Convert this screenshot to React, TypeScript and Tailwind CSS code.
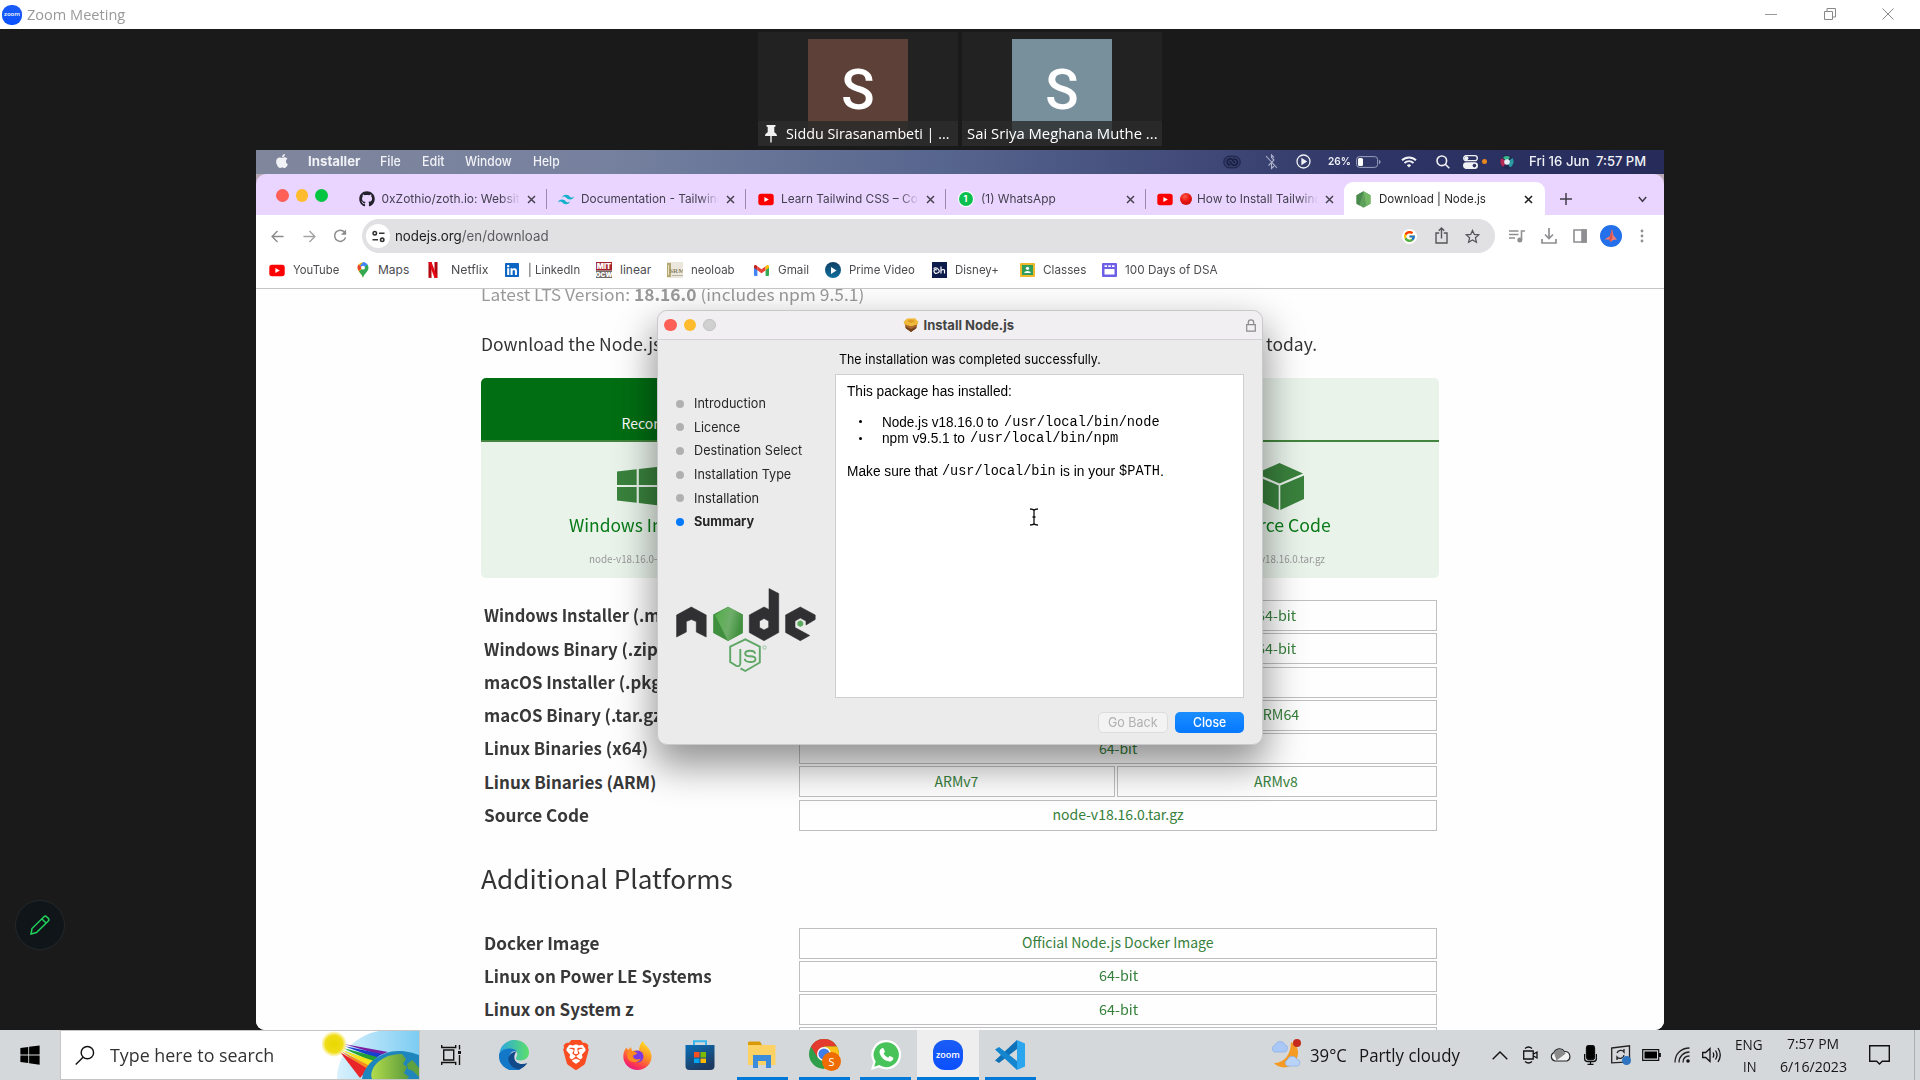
import React, { useLayoutEffect, useRef, useState } from "react";
import { FaApple, FaGithub, FaLinkedin, FaWhatsapp, FaWindows } from "react-icons/fa";
import { SiTailwindcss, SiBrave } from "react-icons/si";
import { FcGoogle } from "react-icons/fc";

/** A one-line label squeezed or stretched to fill exactly `w` pixels. */
function Fit({ w, className = "", children }: { w: number; className?: string; children: React.ReactNode }) {
  const ref = useRef<HTMLSpanElement>(null);
  const [scale, setScale] = useState(1);
  useLayoutEffect(() => {
    if (ref.current && ref.current.offsetWidth > 0) setScale(w / ref.current.offsetWidth);
  }, [w]);
  return (
    <span className={"flex shrink-0 " + className} style={{ width: w }}>
      <span ref={ref} className="inline-block origin-left shrink-0 whitespace-pre leading-none" style={{ transform: `scaleX(${scale})` }}>
        {children}
      </span>
    </span>
  );
}

const YouTube = () => (
  <svg className="h-[13px] w-4 shrink-0" viewBox="0 0 16 13">
    <rect x="0.3" y="0.8" width="15.4" height="11.4" rx="2.6" fill="#f00" />
    <path d="M6.4 3.9v5.2l4.4-2.6z" fill="#fff" />
  </svg>
);

const NodeHex = () => (
  <svg className="h-[17px] w-[15px]" viewBox="0 0 15 17">
    <path d="M7.5 0.3l7 4v8.4l-7 4-7-4V4.300z" fill="#5fa15c" />
    <path d="M7.500 0.3l7 4v8.400l-4 2.300z" fill="#77b868" />
    <path d="M0.500 4.300L7.500 0.300 3.500 14.400l-3-1.700z" fill="#4b8a4e" />
  </svg>
);

const Lights = ({ dim }: { dim?: boolean }) => (
  <div className="flex items-center gap-[7px]">
    <i className="size-[12.500px] rounded-full bg-[#fe5f57]" />
    <i className="size-[12.500px] rounded-full bg-[#febb2e]" />
    <i className={dim ? "size-[12.500px] rounded-full border border-[#c2c2c3] bg-[#d1d0d1]" : "size-[12.500px] rounded-full bg-[#06c540]"} />
  </div>
);

const ZoomLogo = ({ big }: { big?: boolean }) => (
  <span
    className={
      big
        ? "flex h-[30px] w-[30px] items-center justify-center rounded-[12px] bg-gradient-to-b from-[#1a5cf5] to-[#0b50ff] text-[9px] font-semibold leading-none text-white"
        : "flex size-5 shrink-0 items-center justify-center rounded-[9px] bg-gradient-to-b from-[#1a5cf5] to-[#0b50ff] text-[6px] font-semibold leading-none text-white"
    }
  >
    <span className="pb-px">zoom</span>
  </span>
);

function TitleBar() {
  return (
    <header className="flex h-[29px] items-center bg-white pl-[2px] font-['Open_Sans',sans-serif] text-[#999]">
      <ZoomLogo />
      <Fit w={98} className="ml-[5px] text-[15px]">Zoom Meeting</Fit>
      <div className="ml-auto flex items-center gap-[46px] pb-px pr-[26px]">
        <i className="mr-px h-px w-3 bg-[#999]" />
        <svg className="size-3" viewBox="0 0 12 12" fill="none" stroke="#888">
          <path d="M0.500 3.500h8v8h-8zM3 3.500v-3h8.500V9H8.500" />
        </svg>
        <svg className="size-3" viewBox="0 0 12 12" fill="none" stroke="#888">
          <path d="M0.500 0.500l11 11M11.500 0.500l-11 11" />
        </svg>
      </div>
    </header>
  );
}

function Participants() {
  return (
    <div className="flex h-[121px] justify-center gap-1 pt-[3px]">
      <div className="relative flex h-[114px] w-[200px] justify-center bg-[#222] pt-[7px]">
        <div className="flex h-[100px] w-[100px] items-center justify-center bg-[#5d4037] pt-[2px] font-[Roboto,sans-serif] text-[55px] font-medium leading-none text-white">S</div>
        <div className="absolute inset-x-0 bottom-0 flex h-[25px] items-center bg-[#2b2b2be0] pl-[7px] font-['Open_Sans',sans-serif] text-[15px] text-white">
          <svg className="h-[18px] w-3" viewBox="0 0 12 18" fill="#f0f0f0">
            <path d="M1.500 0h9v1.500L9.300 2v5.300c1.500.7 2.700 2 2.700 3.700H6.700v6l-.7 1-.7-1v-6H0c0-1.700 1.200-3 2.700-3.700V2L1.500 1.500z" />
          </svg>
          <Fit w={163} className="ml-[9px]">Siddu Sirasanambeti | ...</Fit>
        </div>
      </div>
      <div className="relative flex h-[114px] w-[200px] justify-center bg-[#222] pt-[7px]">
        <div className="flex h-[100px] w-[100px] items-center justify-center bg-[#78909c] pt-[2px] font-[Roboto,sans-serif] text-[55px] font-medium leading-none text-white">S</div>
        <div className="absolute inset-x-0 bottom-0 flex h-[25px] items-center bg-[#2b2b2bd0] pl-[5px] font-['Open_Sans',sans-serif] text-[15px] text-white">
          <Fit w={191}>Sai Sriya Meghana Muthe ...</Fit>
        </div>
      </div>
    </div>
  );
}

function MenuBar() {
  return (
    <div className="flex h-6 shrink-0 items-center bg-[linear-gradient(90deg,#80869c_0%,#76819f_25%,#56658e_49%,#434c7a_65%,#2e3566_80%,#262b5a_100%)] pb-px pl-[18px] pr-[18px] text-[13px] text-[#f1f2f6]">
      <FaApple className="mt-[-1px] size-4" />
      <Fit w={52} className="ml-[18px] font-bold">Installer</Fit>
      <Fit w={21} className="ml-[20px] font-medium">File</Fit>
      <Fit w={23} className="ml-[21px] font-medium">Edit</Fit>
      <Fit w={47} className="ml-[20px] font-medium">Window</Fit>
      <Fit w={27} className="ml-[21px] font-medium">Help</Fit>
      <div className="ml-auto flex items-center">
        <svg className="h-[14px] w-[18px]" viewBox="0 0 19 14" fill="none" stroke="#171a3a" strokeWidth="1.600">
          <rect x="0.800" y="0.800" width="17.400" height="12.400" rx="6" fill="#323a68" strokeWidth="0.800" />
          <path d="M8 10a3.200 3.200 0 1 1 1.800-5.500l2.700 3.500M11 4.300a3.200 3.200 0 1 1-1.500 5L7 6.200" strokeWidth="1.300" />
        </svg>
        <svg className="ml-[24px] h-[16px] w-[13px]" viewBox="0 0 13 16" fill="none" stroke="#aeb2cb" strokeWidth="1.100">
          <path d="M1 2l11 12M3.500 11.500L9 6 6.500 3.500V1L9 3.500M6.500 8v6.500L9 12" />
        </svg>
        <svg className="ml-[18px] size-[15px]" viewBox="0 0 15 15" fill="none" stroke="#f1f2f6" strokeWidth="1.300">
          <circle cx="7.500" cy="7.500" r="6.500" />
          <path d="M6 5v5l4-2.500z" fill="#f1f2f6" />
        </svg>
        <Fit w={23} className="ml-[17px] text-[11px] font-semibold">26%</Fit>
        <svg className="ml-[5px] h-3 w-[25px]" viewBox="0 0 25 12" fill="none">
          <rect x="0.600" y="0.600" width="21" height="10.800" rx="3" stroke="#9a9fbd" />
          <rect x="2" y="2" width="5" height="8" rx="1.500" fill="#fff" />
          <path d="M23 4v4c1-.3 1.500-1 1.500-2S24 4.300 23 4z" fill="#9a9fbd" />
        </svg>
        <svg className="ml-[20px] h-3 w-4" viewBox="0 0 16 12" fill="none" stroke="#f1f2f6" strokeWidth="1.900">
          <path d="M1 4.300a10 10 0 0 1 14 0M3.500 7a6.400 6.400 0 0 1 9 0" />
          <path d="M8 11.500L5.800 9.200a3.200 3.200 0 0 1 4.400 0z" fill="#f1f2f6" stroke="none" />
        </svg>
        <svg className="ml-[19px] size-[14px]" viewBox="0 0 14 14" fill="none" stroke="#f1f2f6" strokeWidth="1.600">
          <circle cx="5.800" cy="5.800" r="4.800" />
          <path d="M9.300 9.300L13.300 13.300" />
        </svg>
        <svg className="ml-[13px] h-[14px] w-[15px]" viewBox="0 0 15 14" fill="none" stroke="#f1f2f6" strokeWidth="1.300">
          <rect x="0.700" y="0.700" width="13.600" height="5" rx="2.500" />
          <rect x="0.700" y="8" width="13.600" height="5.300" rx="2.600" fill="#f1f2f6" />
          <circle cx="3.400" cy="3.200" r="2" fill="#f1f2f6" stroke="none" />
          <circle cx="11.400" cy="10.600" r="1.800" fill="#2b3060" stroke="none" />
        </svg>
        <i className="ml-1 size-[5px] rounded-full bg-[#e8871e]" />
        <svg className="ml-[13px] size-[14px]" viewBox="0 0 14 14">
          <circle cx="7" cy="7" r="7" fill="#232a52" />
          <path d="M7 7L1.500 3A6.500 6.500 0 0 0 3 12z" fill="#b32a55" />
          <path d="M7 7l5.500-4A6.500 6.500 0 0 1 10 12.500z" fill="#2a9aa0" />
          <path d="M7 7L3 2.500a6.500 6.500 0 0 1 7-.5z" fill="#38b58c" />
          <circle cx="7" cy="7" r="2.800" fill="#e6eef5" />
        </svg>
        <Fit w={60} className="ml-[15px] font-medium">Fri 16 Jun</Fit>
        <Fit w={50} className="ml-[7px] font-medium">7:57 PM</Fit>
      </div>
    </div>
  );
}

const Cross = ({ dark }: { dark?: boolean }) => (
  <svg className="size-[9px] shrink-0" viewBox="0 0 9 9" stroke={dark ? "#1c1c1e" : "#47424f"} strokeWidth="1.500">
    <path d="M1 1l7 7M8 1l-7 7" />
  </svg>
);

function Tab({ icon, title, w, last }: { icon: React.ReactNode; title: React.ReactNode; w: number; last?: boolean }) {
  return (
    <div className="flex h-[33px] w-[199.700px] items-center pt-px">
      <span className="flex w-4 items-center justify-center">{icon}</span>
      <div className="ml-[7px] w-[138px] overflow-hidden py-1 text-[12px] text-[#45404f] [mask-image:linear-gradient(90deg,#000_86%,transparent_100%)]">
        <div className="flex items-center">{typeof title === "string" ? <Fit w={w}>{title}</Fit> : title}</div>
      </div>
      <span className="ml-[7px] flex"><Cross /></span>
      <i className={last ? "hidden" : "ml-[10px] h-5 w-px bg-[#9a8aae]"} />
    </div>
  );
}

function TabStrip() {
  return (
    <div className="h-[41px] shrink-0 bg-[#b9a9b4]">
      <div className="flex h-[41px] items-start rounded-t-[10px] bg-[#e9d5ff] pl-[20px] pt-2">
        <div className="pt-[7px]"><Lights /></div>
        <div className="ml-[31px] flex">
          <Tab icon={<FaGithub className="size-4 text-[#24202c]" />} title="0xZothio/zoth.io: Website" w={145} />
          <Tab icon={<SiTailwindcss className="size-[17px] text-[#14b0cc]" />} title="Documentation - Tailwind" w={143} />
          <Tab icon={<YouTube />} title="Learn Tailwind CSS – Cour" w={148} />
          <Tab
            icon={<span className="flex size-[14px] items-center justify-center rounded-full bg-[#09bf4f] text-[9px] font-bold text-white ring-1 ring-white">1</span>}
            title="(1) WhatsApp"
            w={75}
          />
          <div className="w-[187px]">
            <Tab
              icon={<YouTube />}
              title={
                <>
                  <i className="mr-[5px] size-3 shrink-0 rounded-full bg-[radial-gradient(circle_at_40%_30%,#ff5a4a,#e8150f_45%,#b80c0c)]" />
                  <Fit w={125}>How to Install Tailwind</Fit>
                </>
              }
              w={0}
              last
            />
          </div>
        </div>
        <div className="relative flex h-[33px] w-[201px] items-center rounded-t-[9px] bg-white pl-[12px] pt-px">
          <NodeHex />
          <Fit w={107} className="ml-2 text-[12px] text-[#26262a]">Download | Node.js</Fit>
          <span className="ml-[38px]"><Cross dark /></span>
        </div>
        <svg className="ml-[15px] mt-[11px] size-3" viewBox="0 0 12 12" stroke="#423c4a" strokeWidth="1.500">
          <path d="M6 0v12M0 6h12" />
        </svg>
        <svg className="ml-[66px] mt-[14px] h-[7px] w-[9px]" viewBox="0 0 9 7" fill="none" stroke="#423c4a" strokeWidth="1.500">
          <path d="M0.800 1L4.500 5.300 8.200 1" />
        </svg>
      </div>
    </div>
  );
}

function Toolbar() {
  return (
    <div className="flex h-[42px] shrink-0 items-center bg-white pl-[15px]">
      <svg className="size-[13px]" viewBox="0 0 14 14" fill="none" stroke="#8b8b8e" strokeWidth="1.500"><path d="M13.500 7H1.500M7 1L1.200 7 7 13" /></svg>
      <svg className="ml-[19px] size-[13px]" viewBox="0 0 14 14" fill="none" stroke="#a3a3a6" strokeWidth="1.500"><path d="M0.500 7h12M7 1l5.800 6L7 13" /></svg>
      <svg className="ml-[17px] size-[14px]" viewBox="0 0 15 15" fill="none" stroke="#8b8b8e" strokeWidth="1.600"><path d="M13.500 9A6 6 0 1 1 12.300 3.300L13.800 5" /><path d="M14 0.500v5.700H8.500z" fill="#8b8b8e" stroke="none" /></svg>
      <div className="ml-[15px] flex h-[34px] w-[1133px] items-center rounded-full bg-[#e1e1e3] pl-[4px]">
        <span className="flex size-[24px] items-center justify-center rounded-full bg-white">
          <svg className="size-[13px]" viewBox="0 0 13 13" fill="none" stroke="#333" strokeWidth="1.600">
            <circle cx="2.800" cy="3.200" r="1.700" /><path d="M7 3.200h5.500M0.500 9.800H6" /><circle cx="10.200" cy="9.800" r="1.700" />
          </svg>
        </span>
        <Fit w={154} className="ml-[5px] text-[14px] text-[#5b5b5f]"><span className="text-[#1b1b1d]">nodejs.org</span>/en/download</Fit>
        <span className="ml-[853px] flex size-[15px] items-center justify-center rounded-full bg-white"><FcGoogle className="size-[13px]" /></span>
        <svg className="ml-[18px] mt-[-1px] h-[17px] w-[13px]" viewBox="0 0 13 17" fill="none" stroke="#55555a" strokeWidth="1.400"><path d="M4.200 6H1v10h11V6H8.800M6.500 11.500V1.200M3.700 3.800L6.500 1l2.800 2.800" /></svg>
        <svg className="ml-[17px] size-[15px]" viewBox="0 0 15 15" fill="none" stroke="#55555a" strokeWidth="1.300"><path d="M7.500 1.500l1.800 4 4.400.4-3.300 2.900 1 4.400-3.900-2.300-3.900 2.300 1-4.400L1.300 5.900l4.400-.4z" /></svg>
      </div>
      <svg className="ml-[14px] h-[14px] w-[16px]" viewBox="0 0 16 14" fill="none" stroke="#8f8f92" strokeWidth="1.600"><path d="M0 2h9.500M0 5.500h9.500M0 9h6M12.500 11V2H16" /><circle cx="10.800" cy="11" r="1.700" fill="#8f8f92" /></svg>
      <svg className="ml-[16px] size-[16px]" viewBox="0 0 16 16" fill="none" stroke="#8f8f92" strokeWidth="1.700"><path d="M8 0v10M4 6.500L8 10.500 12 6.500M1 11v4h14v-4" /></svg>
      <svg className="ml-[16px] h-[14px] w-[14px]" viewBox="0 0 14 14" fill="none" stroke="#8f8f92" strokeWidth="1.600"><path d="M1 1h12v12H1z" /><path d="M9 1h4v12H9z" fill="#8f8f92" /></svg>
      <svg className="ml-[13px] size-[22px]" viewBox="0 0 22 22"><circle cx="11" cy="11" r="11" fill="#2370ea" /><path d="M12 4l1.500 6.500 3.500 4-4 .5-2 2-2-2.500-4.500 0L10 11z" fill="#f47c74" /><path d="M12 4L12.500 12l-1.500 5-2-2.500z" fill="#d9534f" /></svg>
      <svg className="ml-[18px] h-[14px] w-1" viewBox="0 0 4 14" fill="#8f8f92"><circle cx="2" cy="2" r="1.400" /><circle cx="2" cy="7" r="1.400" /><circle cx="2" cy="12" r="1.400" /></svg>
    </div>
  );
}

function Bookmark({ icon, label, w, slot }: { icon: React.ReactNode; label: string; w: number; slot: number }) {
  return (
    <div className="flex shrink-0 items-center" style={{ width: slot }}>
      <span className="flex w-4 shrink-0 justify-center">{icon}</span>
      <Fit w={w} className="ml-2">{label}</Fit>
    </div>
  );
}

function Bookmarks() {
  return (
    <div className="flex h-[32px] shrink-0 items-center border-b border-[#c6c6c8] bg-white pb-[5px] pl-[13px] text-[12px] text-[#4c4c50]">
      <Bookmark slot={86} w={46} label="YouTube" icon={<YouTube />} />
      <div className="flex w-[71px] items-center">
        <svg className="ml-[2px] h-4 w-3" viewBox="0 0 12 16"><path d="M6 16C5.500 12 .5 10 .5 5.700A5.500 5.500 0 0 1 6 .3z" fill="#fbbc04" /><path d="M6 16c.5-4 5.500-6 5.500-10.300A5.500 5.500 0 0 0 10 2L2 9.500C4 12 5.500 13.500 6 16z" fill="#34a853" /><path d="M6 .3A5.500 5.500 0 0 1 10.500 2.500L6 7z" fill="#4285f4" /><path d="M6 .3L3 3.500l2 2 4-4A5.500 5.500 0 0 0 6 .3z" fill="#4285f4" /><path d="M1.500 2.500L5 5.500 2 9C0 6.500.3 4 1.500 2.500z" fill="#ea4335" /><circle cx="6" cy="5.700" r="1.900" fill="#fff" /></svg>
        <Fit w={31} className="ml-[9px]">Maps</Fit>
      </div>
      <div className="flex w-[78px] items-center">
        <svg className="ml-[2px] h-4 w-[10px]" viewBox="0 0 10 16"><path d="M0.500 0h3v16l-3-.3zM6.500 0h3v15.700l-3 .3z" fill="#b1060f" /><path d="M0.500 0h3l6 15.700-3 .3z" fill="#e50914" /></svg>
        <Fit w={37} className="ml-[13px]">Netflix</Fit>
      </div>
      <Bookmark slot={92} w={52} label="| LinkedIn" icon={<FaLinkedin className="size-4 text-[#0a66c2]" />} />
      <Bookmark slot={70.500} w={31} label="linear" icon={
        <svg className="size-4" viewBox="0 0 16 16">
          <path d="M0 0h16v8.500H0z" fill="#a3232f" /><path d="M0 8.500h16V16H0z" fill="#746a66" />
          <text x="8" y="7.300" fontSize="7.500" fontWeight="900" textAnchor="middle" fill="#fff">MIT</text>
          <text x="8" y="15" fontSize="6.500" fontWeight="900" textAnchor="middle" fill="#fff">OCW</text>
        </svg>} />
      <Bookmark slot={87} w={44} label="neoloab" icon={
        <svg className="size-4" viewBox="0 0 16 16">
          <path d="M0 0h16v16H0z" fill="#ebe7dc" /><path d="M0 1h4v14H0z" fill="#b3a873" /><path d="M1.500 3v10" stroke="#e8e0bb" /><path d="M5 13.500h11" stroke="#b9b3a0" />
          <text x="10" y="10.500" fontSize="7" fontWeight="700" textAnchor="middle" fill="#8b8468" fontFamily="Liberation Serif">SRM</text>
        </svg>} />
      <Bookmark slot={71.500} w={31} label="Gmail" icon={
        <svg className="h-[11px] w-[15px]" viewBox="0 0 15 11"><path d="M0 1.500L3.400 4v7H1a1 1 0 0 1-1-1z" fill="#4285f4" /><path d="M15 1.500L11.600 4v7H14a1 1 0 0 0 1-1z" fill="#34a853" /><path d="M3.400 1.200L7.500 4.300l4.100-3.100v4L7.500 8.300 3.400 5.200z" fill="#ea4335" /><path d="M0 1.500C0 .2 1.400-.4 2.500.5l.9.700v4L0 2.700z" fill="#c5221f" /><path d="M15 1.500c0-1.300-1.400-1.900-2.500-1l-.9.700v4L15 2.700z" fill="#fbbc04" /></svg>} />
      <Bookmark slot={106} w={66} label="Prime Video" icon={
        <span className="flex size-4 items-center justify-center rounded-full bg-gradient-to-b from-[#0d3f63] to-[#12709e]"><svg className="size-[7px]" viewBox="0 0 7 7" fill="#fff"><path d="M1 0v7l5.500-3.500z" /></svg></span>} />
      <Bookmark slot={88} w={44} label="Disney+" icon={
        <svg className="h-4 w-[15px]" viewBox="0 0 15 16">
          <path d="M0 0h15v16H0z" fill="#0e1c4c" /><path d="M1.500 6.500q3-1.500 5 1t-1 3.500-3.500-1.500 3-1.500M9 4.500v7M9 8.500q3-2 3.500 0v3" fill="none" stroke="#fff" strokeWidth="1.200" />
        </svg>} />
      <Bookmark slot={82} w={43} label="Classes" icon={
        <svg className="h-[14px] w-[15px]" viewBox="0 0 15 14"><rect width="15" height="14" rx="1" fill="#f0b92c" /><rect x="2" y="2" width="11" height="10" fill="#2f9e5b" /><circle cx="7.500" cy="5.300" r="1.600" fill="#fff" /><path d="M4.200 10c.3-2.700 6.300-2.700 6.600 0z" fill="#fff" /></svg>} />
      <Bookmark slot={110} w={93} label="100 Days of DSA" icon={
        <svg className="h-[14px] w-[15px]" viewBox="0 0 15 14"><rect width="15" height="14" rx="1" fill="#6d5fe6" /><rect x="2.500" y="6" width="10" height="5.500" fill="#fff" /><path d="M2.500 2.300h2.500v1.800H2.500zM6.300 2.300h2.500v1.800H6.300zM10 2.300h2.500v1.800H10z" fill="#fff" /></svg>} />
    </div>
  );
}

function Row({ label, lw, cells }: { label: string; lw: number; cells: [string, number][] }) {
  return (
    <div className="flex h-[31px] shrink-0">
      <div className="flex w-[318px] shrink-0 items-center pl-[3px] text-[17px] font-bold text-[#383838]">
        <Fit w={lw} className="mt-[-1.500px]">{label}</Fit>
      </div>
      <div className="flex w-[638px] gap-[2px]">
        {cells.map(([t, w], i) => (
          <div
            key={i}
            className={
              "flex items-center justify-center border border-[#bfbfc1] pb-[2px] text-[14px] text-[#36803b] " +
              (cells.length === 1 ? "w-[638px]" : i === 0 ? "w-[316px] pr-px" : "w-[320px] pr-[2px]")
            }
          >
            {t && <Fit w={w}>{t}</Fit>}
          </div>
        ))}
      </div>
    </div>
  );
}

function Page() {
  return (
    <main className="min-h-0 flex-1 overflow-hidden bg-[#fefefe] pl-[225px] font-['Noto_Sans_CJK_SC',sans-serif] text-[#333]">
      <div className="flex h-[89px] flex-col text-[17px]">
        <Fit w={383.500} className="mt-[-3px] text-[16.500px] text-[#999]">Latest LTS Version: <b>18.16.0</b> (includes npm 9.5.1)</Fit>
        <Fit w={836} className="mt-[32px]">Download the Node.js source code or a pre-built installer for your platform, and start developing today.</Fit>
      </div>
      <section className="w-[958px] overflow-hidden rounded-[5px] bg-[#e9f3ea]">
        <div className="flex h-[64px] border-b-2 border-[#43853d]">
          <div className="flex w-[479px] justify-center bg-[#026e13] pt-[38px] text-[14px] text-white"><Fit w={198}>Recommended For Most Users</Fit></div>
        </div>
        <div className="grid h-[136px] grid-cols-3 text-[17.500px] text-[#087a17]">
          <div className="flex flex-col items-center pt-[21px]">
            <FaWindows className="h-[46px] w-[48px] text-[#3a823d]" preserveAspectRatio="none" />
            <Fit w={143} className="mt-[7px]">Windows Installer</Fit>
            <Fit w={103} className="mt-[19px] text-[11px] text-[#999]">node-v18.16.0-x64.msi</Fit>
          </div>
          <div />
          <div className="flex flex-col items-center pt-[21px]">
            <svg className="h-[47px] w-[49px]" viewBox="0 0 49 47" fill="#3a823d">
              <path d="M24.500 0L48 10.500 24.500 20.500 1 10.500zM0 12.500l23.700 10V47L0 36zM49 12.500l-23.700 10V47L49 36z" />
            </svg>
            <Fit w={104} className="mt-[6px]">Source Code</Fit>
            <Fit w={92} className="mt-[19px] text-[11px] text-[#999]">node-v18.16.0.tar.gz</Fit>
          </div>
        </div>
      </section>
      <section className="mt-[22px] flex flex-col gap-[2.250px]">
        <Row label="Windows Installer (.msi)" lw={196} cells={[["32-bit", 39], ["64-bit", 39]]} />
        <Row label="Windows Binary (.zip)" lw={180} cells={[["32-bit", 39], ["64-bit", 39]]} />
        <Row label="macOS Installer (.pkg)" lw={184} cells={[["", 0]]} />
        <Row label="macOS Binary (.tar.gz)" lw={184} cells={[["64-bit", 39], ["ARM64", 45]]} />
        <Row label="Linux Binaries (x64)" lw={164} cells={[["64-bit", 38]]} />
        <Row label="Linux Binaries (ARM)" lw={172} cells={[["ARMv7", 44], ["ARMv8", 44]]} />
        <Row label="Source Code" lw={105} cells={[["node-v18.16.0.tar.gz", 131]]} />
      </section>
      <Fit w={252} className="mt-[34px] text-[26px]">Additional Platforms</Fit>
      <section className="mt-[37px] flex flex-col gap-[2.250px]">
        <Row label="Docker Image" lw={115} cells={[["Official Node.js Docker Image", 192]]} />
        <Row label="Linux on Power LE Systems" lw={228} cells={[["64-bit", 39]]} />
        <Row label="Linux on System z" lw={150} cells={[["64-bit", 39]]} />
        <Row label="" lw={1} cells={[["", 0]]} />
      </section>
    </main>
  );
}

const NodeLogo = () => (
  <svg className="h-[86px] w-[141px]" viewBox="0 0 141 86">
    <defs>
      <linearGradient id="hexLight" x1="0" y1="0" x2="1" y2="0.300"><stop offset="0" stopColor="#4fae45" /><stop offset="0.600" stopColor="#6fae6a" /><stop offset="1" stopColor="#41903f" /></linearGradient>
    </defs>
    <g fill="#303032" fillRule="evenodd" stroke="#303032" strokeWidth="0.600" strokeLinejoin="round">
      <path d="M0.600 49V27L15.300 19 30.200 27V49L20.300 44V33.500L15.300 31.500 10.300 33.500V44z" />
      <path d="M93 0.600L102.700 5.500V44.500L88 52.700 73.300 44.500V27L88 19 93 21.500zM88 30.500L83.500 33V39.500L88 42 92.700 39.500V33z" />
      <path d="M109.600 27L124.300 19 139.200 27V31.500L130 37V33L124.300 30 119 33V39.500L133.700 47.500 124.300 52.700 109.600 44.500z" />
    </g>
    <path d="M52 18.700L66.700 26.500V45L52 53 37.200 45V26.500z" fill="#3f8f3e" />
    <path d="M52 18.700L66.700 26.500V45L52 53 39 27z" fill="url(#hexLight)" />
    <path d="M124.300 32.300l2.900 1.700v3.300l-2.900 1.700-2.900-1.700v-3.300z" fill="#5cab5f" />
    <path d="M64.300 61V75q0 4.200-4 2.800L54.200 74V58.700L69.300 51.300 83.800 58.700V74.500L69.300 83 64.500 80.300M79 65.800q0-3-5-3-4.800 0-4.800 2.800t5 2.700q5.300 0 5.300 2.900t-5.300 2.800q-5.300 0-5.500-3.200" fill="none" stroke="#5fa766" strokeWidth="1.900" />
    <circle cx="88.500" cy="59.500" r="1.700" fill="none" stroke="#8fbf93" strokeWidth="0.900" />
  </svg>
);

function Installer() {
  const steps: [string, number][] = [["Introduction", 72], ["Licence", 46], ["Destination Select", 108], ["Installation Type", 97], ["Installation", 65], ["Summary", 60]];
  return (
    <div className="absolute left-[401px] top-[160px] flex h-[435px] w-[606px] flex-col rounded-[10px] border border-[#c9c9cb] bg-[#ebebeb] text-[13px] text-[#262626] shadow-[0_18px_38px_3px_rgba(0,0,0,0.42)]">
      <div className="flex h-[29px] shrink-0 items-center rounded-t-[10px] border-b border-[#d2d2d3] bg-[#f1eff1] pl-[6px]">
        <Lights dim />
        <svg className="ml-[187px] h-[14px] w-[16px]" viewBox="0 0 16 14">
          <path d="M1.500 5l6.500 3 6.500-3-1 5L8 14l-5.500-4z" fill="#a9682f" />
          <path d="M2.500 8.500L8 11l5.500-2.500-.5 2L8 14l-5-3.500z" fill="#74421c" />
          <path d="M0.500 4L4 .6 12 .3l3.500 3.700-1.500 2.500-6 1.800-6-1.800z" fill="#f0b93a" />
          <path d="M4 3l4-1.600 4.500 1.800L8 5z" fill="#dd9c27" />
        </svg>
        <Fit w={91} className="ml-[5px] font-bold text-[#444]">Install Node.js</Fit>
        <svg className="ml-auto mr-[6px] h-[13px] w-[10px]" viewBox="0 0 10 13" fill="none" stroke="#8a8a8c" strokeWidth="1.200">
          <path d="M0.700 5.600h8.600v6.600H0.700zM2.300 5.600V3.500a2.700 2.700 0 0 1 5.400 0v2.100" />
        </svg>
      </div>
      <div className="flex flex-1">
        <div className="flex w-[177px] flex-col pl-[18px] pt-[52px]">
          {steps.map(([s, w], i) => (
            <div key={s} className="flex h-[23.600px] items-center">
              <i className={i === 5 ? "size-2 rounded-full bg-[#057aff]" : "size-2 rounded-full bg-[#b0b0b1]"} />
              <Fit w={w} className={i === 5 ? "ml-[10px] font-bold" : "ml-[10px]"}>{s}</Fit>
            </div>
          ))}
          <div className="mt-[54px]"><NodeLogo /></div>
        </div>
        <div className="flex w-[409px] flex-col">
          <Fit w={262} className="ml-[4px] mt-[13px] text-black">The installation was completed successfully.</Fit>
          <div className="mt-[8px] h-[324px] w-[409px] shrink-0 border border-[#cfcfd0] bg-white pl-[11px] pt-[9px] font-['Liberation_Sans',sans-serif] text-[14px] text-black">
            <Fit w={165}>This package has installed:</Fit>
            <div className="mt-[15.500px] flex h-[16.500px] items-center">
              <i className="ml-[12px] size-[3px] rounded-full bg-black" />
              <Fit w={117} className="ml-[20px]">Node.js v18.16.0 to</Fit>
              <Fit w={156} className="ml-[5px] font-['Liberation_Mono',monospace]">/usr/local/bin/node</Fit>
            </div>
            <div className="flex h-[16.500px] items-center">
              <i className="ml-[12px] size-[3px] rounded-full bg-black" />
              <Fit w={83} className="ml-[20px]">npm v9.5.1 to</Fit>
              <Fit w={148} className="ml-[5px] font-['Liberation_Mono',monospace]">/usr/local/bin/npm</Fit>
            </div>
            <div className="mt-[16px] flex h-[16.500px] items-center">
              <Fit w={91}>Make sure that</Fit>
              <Fit w={114} className="ml-[4px] font-['Liberation_Mono',monospace]">/usr/local/bin</Fit>
              <Fit w={55} className="ml-[4px]">is in your</Fit>
              <Fit w={41} className="ml-[4px] font-['Liberation_Mono',monospace]">$PATH</Fit>
              <span className="leading-none">.</span>
            </div>
          </div>
          <div className="mt-[14px] flex justify-end gap-[7px]">
            <div className="flex h-[21px] w-[70px] items-center justify-center rounded-[5px] border border-[#dcdcdc] bg-[#f3f3f3] text-[#b0b0b0]"><Fit w={50}>Go Back</Fit></div>
            <div className="flex h-[21px] w-[69px] items-center justify-center rounded-[5px] bg-gradient-to-b from-[#1a8dff] to-[#0578ff] font-medium text-white"><Fit w={33}>Close</Fit></div>
          </div>
        </div>
      </div>
      <svg className="absolute left-[371px] top-[197px] h-[18px] w-[10px]" viewBox="0 0 10 18" fill="none" stroke="#111" strokeWidth="1.300">
        <path d="M1 1q3.500 0 4 1.500Q5.500 1 9 1M1 17q3.500 0 4-1.500 .5 1.500 4 1.500M5 2.500v13M3.500 9h3" />
      </svg>
    </div>
  );
}

const AppButton = ({ children, w, line, active }: { children: React.ReactNode; w: number; line?: boolean; active?: boolean }) => (
  <div className={"flex h-[50px] shrink-0 flex-col items-center pt-[10px] " + (active ? "bg-[#eeeeee]" : "")} style={{ width: w }}>
    <div className="flex h-[30px] items-center justify-center">{children}</div>
    {line && <i className={active ? "mt-[7px] h-[3px] w-full bg-[#0078d7]" : "mt-[7px] h-[3px] w-[51px] bg-[#0078d7]"} />}
  </div>
);

function Taskbar() {
  return (
    <footer className="flex h-[50px] shrink-0 items-center bg-[#d5d8da] font-['Open_Sans',sans-serif] text-[#161616]">
      <div className="flex w-[60px] justify-center"><FaWindows className="size-[22px] text-black" /></div>
      <div className="flex h-[50px] w-[360px] items-center border border-[#c5c5c5] bg-white pl-[14px]">
        <svg className="size-[21px]" viewBox="0 0 21 21" fill="none" stroke="#111" strokeWidth="1.500"><circle cx="13" cy="7.500" r="6.500" /><path d="M8.500 12.300L0.800 20" /></svg>
        <Fit w={164} className="ml-[15px] text-[18.500px] text-[#333]">Type here to search</Fit>
        <svg className="ml-[48px] h-[48px] w-[97px] shrink-0" viewBox="0 0 97 48">
          <defs>
            <radialGradient id="sun"><stop offset="0" stopColor="#e8d800" /><stop offset="0.700" stopColor="#f0dd18" /><stop offset="1" stopColor="#f8ee90" stopOpacity="0.400" /></radialGradient>
            <linearGradient id="sky"><stop offset="0" stopColor="#d9f1fd" /><stop offset="1" stopColor="#7cccf2" /></linearGradient>
            <linearGradient id="land"><stop offset="0" stopColor="#b3dc4c" /><stop offset="1" stopColor="#5a9a3c" /></linearGradient>
          </defs>
          <path d="M15 48C15 20 38 -1 68 -1H97V48z" fill="url(#sky)" />
          <path d="M22 13L66 21 58 24z" fill="#7b1fa2" />
          <path d="M22 15L60 23 54 27z" fill="#1a3fd0" />
          <path d="M21 17L55 26 51 31z" fill="#23a032" />
          <path d="M20 19L52 30 48 36z" fill="#f2e31c" />
          <path d="M19 20L48 35 46 41z" fill="#f78c1e" />
          <path d="M18 21L46 38 38 47z" fill="#e8262a" />
          <circle cx="12" cy="13" r="12.500" fill="url(#sun)" />
          <path d="M40 48C42 32 60 20 76 20c9 0 15 2 21 4V48z" fill="#1f86bd" />
          <path d="M50 48c-3-8 4-17 12-21 5-3 12-4 18-4l4 5-3 5 4 3-3 6 5 4-2 2z" fill="url(#land)" />
          <path d="M85 33l5-4 3 3 4 5v9l-6-6-5-2z" fill="#5fa03f" />
        </svg>
      </div>
      <AppButton w={61}>
        <svg className="size-[20px]" viewBox="0 0 20 20" fill="none" stroke="#111" strokeWidth="1.400"><path d="M2.700 5h10v10h-10zM0.700 0v2.500h14V0M0.700 20v-2.500h14V20M18.500 0v4.500M18.500 10v10" /><path d="M17 6h3v3h-3z" fill="#111" stroke="none" /></svg>
      </AppButton>
      <AppButton w={66}>
        <svg className="size-[30px]" viewBox="0 0 30 30">
          <defs><linearGradient id="eg"><stop offset="0" stopColor="#2aa7e0" /><stop offset="1" stopColor="#5ddf6a" /></linearGradient></defs>
          <path d="M0.500 13C1.500 5 8 0 15.500 0 24 0 30 6 30 12.500c0 5-4 8-8.500 8-3 0-4.500-1-4.500-2.300 0-1 1.300-1.500 1.300-4C18.300 11 15 9 11 9 6 9 2 11 .5 13z" fill="url(#eg)" />
          <path d="M0 14.500C1 10.500 6 8.500 11 8.500c3 0 5.500 1 6.500 2.700-4-.7-7 2.300-7 6 0 6 5 11 11 12A15 15 0 0 1 0 14.500z" fill="#1378c8" />
          <path d="M17.500 11.200c-7 1.500-9.500 6.500-7.500 11 2 4.500 6 7 11 7 3-1.200 6-3.700 7.300-6.200-6 2.500-13 .5-13-6 0-2.300 1-4 2.200-5.800z" fill="#114a8b" />
        </svg>
      </AppButton>
      <AppButton w={58}>
        <span className="relative flex items-center justify-center">
          <i className="absolute h-[22px] w-[18px] rounded-b-[9px] bg-white" />
          <SiBrave className="relative size-[30px] text-[#fb4b20]" />
        </span>
      </AppButton>
      <AppButton w={65}>
        <svg className="size-[29px]" viewBox="0 0 29 29">
          <defs><linearGradient id="ff" x1="0.800" y1="0" x2="0.300" y2="1"><stop offset="0" stopColor="#ffe226" /><stop offset="0.450" stopColor="#ff9122" /><stop offset="0.800" stopColor="#ff3750" /><stop offset="1" stopColor="#e31587" /></linearGradient></defs>
          <path d="M20 0c1 4 8 7 8.500 15C29 23 22 29 14.500 29S0 23 .3 15C.4 11 2 8 3.500 6.500L5 9l3-3 1 4c3-1 5-1 7 0 0-4 1.500-8 4-10z" fill="url(#ff)" />
          <circle cx="14.500" cy="15.500" r="6" fill="#7a3ae0" />
          <path d="M4 12c4-2 8-2 10.500.5-1.500.5-3 2-4.500 2 0 4 4 5 8 3-2 5-12 5-13.500-1z" fill="#ff8a1e" />
        </svg>
      </AppButton>
      <AppButton w={59}>
        <svg className="h-[30px] w-[30px]" viewBox="0 0 30 30"><defs><linearGradient id="st" x2="0.500" y2="1"><stop stopColor="#0a6fb8" /><stop offset="1" stopColor="#1d3a60" /></linearGradient></defs><path d="M9 8V1.200h12V8" fill="none" stroke="#38b6ee" strokeWidth="2" /><path d="M0.500 5h29v21a4 4 0 0 1-4 4h-21a4 4 0 0 1-4-4z" fill="url(#st)" /><path d="M9 12h5.500v5.500H9z" fill="#f25022" /><path d="M15.500 12H21v5.500h-5.500z" fill="#7fba00" /><path d="M9 18.500h5.500V23H9z" fill="#00a4ef" /><path d="M15.500 18.500H21V23h-5.500z" fill="#ffb900" /></svg>
      </AppButton>
      <AppButton w={66} line>
        <svg className="h-[28px] w-[28px]" viewBox="0 0 28 28"><path d="M0 2a1.500 1.500 0 0 1 1.500-1.500H12L14 4H0z" fill="#d99a06" /><path d="M0 4h26.500a1 1 0 0 1 1 1v19H0z" fill="#fdd265" /><path d="M5 14h18v13h-5v-7h-8v7H5z" fill="#3b8ddb" /></svg>
      </AppButton>
      <AppButton w={59} line>
        <svg className="h-[32px] w-[32px]" viewBox="0 0 32 32"><circle cx="15" cy="15" r="15" fill="#2f9e4a" /><path d="M2 7.500A15 15 0 0 1 28 7.500H15L8.500 18.500z" fill="#e33b2e" /><path d="M28 7.500A15 15 0 0 1 15 30L21.500 15 15 7.500z" fill="#fbc116" /><circle cx="15" cy="15" r="7" fill="#fff" /><circle cx="15" cy="15" r="5.600" fill="#3f7de8" /><circle cx="22.500" cy="22.500" r="9.500" fill="#ee6c02" /><text x="22.500" y="26.500" fontSize="11" fill="#fff" textAnchor="middle">S</text></svg>
      </AppButton>
      <AppButton w={63} line>
        <svg className="size-[30px]" viewBox="0 0 30 30">
          <path d="M15.300 0A14.700 14.700 0 1 1 8 27.400L0 30l2.300-8A14.700 14.700 0 0 1 15.300 0z" fill="#fff" />
          <path d="M15.300 2.200A12.500 12.500 0 1 1 8.300 25L3.200 26.700 4.700 21.600A12.500 12.500 0 0 1 15.300 2.200z" fill="#48c35a" />
          <path d="M11 8.200c.6-.3 1.300-.2 1.600.4l1.200 2.600c.2.500 0 1-1.200 2.300 1 1.800 2.400 3.200 4.500 4.200 1.200-1.500 1.500-1.800 2-1.600l2.700 1.300c.6.300.6.800.4 1.600-.4 1.500-2 2.700-3.800 2.600-5-.5-9.600-5.200-9.900-9.500 0-1.700 1-3.200 2.500-3.900z" fill="#fff" />
        </svg>
      </AppButton>
      <AppButton w={62} line active><ZoomLogo big /></AppButton>
      <AppButton w={62} line>
        <svg className="size-[30px]" viewBox="0 0 30 30"><path d="M22 0l8 3.500v23L22 30z" fill="#2aa5ee" /><path d="M22 0v9L4 23 0 20.500z" fill="#0f72b8" /><path d="M22 30v-9L4 7 0 9.500z" fill="#1485cf" /></svg>
      </AppButton>
      <div className="ml-auto flex h-[50px] items-center">
        <svg className="mt-[-2px] h-[30px] w-[31px]" viewBox="0 0 31 30"><path d="M21 3c8 3 9 13 4 20S9 30 4 24C14 24 21 16 21 3z" fill="#f59a23" /><path d="M4 13a4 4 0 0 1 1-7 5.500 5.500 0 0 1 10-.5A4 4 0 0 1 15 13z" fill="#a9c8f5" stroke="#7fa8e8" strokeWidth="0.600" /><path d="M17 27a3.500 3.500 0 0 1 .5-6.300 5 5 0 0 1 9.300-.5A3.500 3.500 0 0 1 27.500 27z" fill="#b9d3f8" stroke="#7fa8e8" strokeWidth="0.600" /><circle cx="27" cy="4" r="4" fill="#c42b1c" /></svg>
        <Fit w={37} className="ml-[9px] text-[19px]">39°C</Fit>
        <Fit w={101} className="ml-[12px] text-[19px]">Partly cloudy</Fit>
        <svg className="ml-[32px] h-[9px] w-[16px]" viewBox="0 0 16 9" fill="none" stroke="#111" strokeWidth="1.400"><path d="M0.700 8.300L8 1l7.300 7.300" /></svg>
        <svg className="ml-[15px] h-[18px] w-[15px]" viewBox="0 0 15 18" fill="none" stroke="#111" strokeWidth="1.300"><path d="M0.700 5h9.500v8H0.700zM10.500 8l3.500-2v6l-3.500-2M2 2.500q3.500-3 7 0M2 15.500q3.500 3 7 0" /></svg>
        <svg className="ml-[12px] h-[14px] w-[21px]" viewBox="0 0 21 14"><path d="M5 13A4.500 4.500 0 0 1 4 4.500 6 6 0 0 1 14.500 3.500 5 5 0 0 1 17 13z" fill="#f4f4f4" stroke="#222" strokeWidth="1.100" /><path d="M4 5A6 6 0 0 1 14.500 3.700l1 2-9 6.800z" fill="#8b8b8b" /></svg>
        <svg className="ml-[13px] h-[20px] w-[13px]" viewBox="0 0 13 20" fill="none" stroke="#111" strokeWidth="1.300"><rect x="2.500" y="0.500" width="8" height="14" rx="2.500" fill="#000" /><path d="M0.600 9v4.500q0 3 3 3h5.800q3 0 3-3V9M6.500 16.500V19M3.500 19.300h6" /></svg>
        <svg className="ml-[14px] h-[20px] w-[20px]" viewBox="0 0 20 20" fill="none" stroke="#222" strokeWidth="1.300"><path d="M0.700 3L18.500 0.800v16l-17.800 1zM6 8a4 4 0 0 1 7-1V4M13 10a4 4 0 0 1-7 2v3" /><circle cx="15.500" cy="15.500" r="4.500" fill="#2f74c0" stroke="none" /></svg>
        <svg className="ml-[11px] h-[12px] w-[19px]" viewBox="0 0 19 12"><path d="M0.700 0.700h16v10.600h-16z" fill="none" stroke="#111" strokeWidth="1.200" /><path d="M2.500 2.500h12.500v7H2.500zM17 4h1.800v4H17z" fill="#000" /></svg>
        <svg className="ml-[13px] h-[16px] w-[17px]" viewBox="0 0 17 16" fill="none" stroke="#222" strokeWidth="1.300"><path d="M1 15.500C1 7 7 1 15.500 1M5 15.500C5 9.500 9.500 5 15.500 5M9 15.500C9 11.500 11.500 9 15.500 9" /><circle cx="14" cy="14" r="1.800" fill="#111" stroke="none" /></svg>
        <svg className="ml-[11px] h-[16px] w-[20px]" viewBox="0 0 20 16" fill="none" stroke="#111" strokeWidth="1.300"><path d="M0.700 5.500h3L8 1.500v13l-4.300-4h-3zM11 5.500q1.500 2.500 0 5M13.500 3.500q3 4.500 0 9M16 1q4.500 7 0 14" /></svg>
        <div className="ml-[12px] flex w-[30px] flex-col items-center gap-[7px] text-[15px]"><Fit w={28}>ENG</Fit><Fit w={13}>IN</Fit></div>
        <div className="ml-[14px] flex w-[70px] flex-col items-center gap-[8px] pb-px text-[15px]"><Fit w={52}>7:57 PM</Fit><Fit w={67}>6/16/2023</Fit></div>
        <svg className="ml-[21px] h-[20px] w-[21px]" viewBox="0 0 21 20" fill="none" stroke="#111" strokeWidth="1.400"><path d="M0.700 0.700h19.600v15.600h-7L10.500 19l-2.800-2.700h-7z" /></svg>
        <i className="ml-[24px] mr-[5px] h-[50px] w-px bg-[#aaadaf]" />
      </div>
    </footer>
  );
}

export default function App() {
  return (
    <div className="relative flex h-[1080px] w-[1920px] flex-col overflow-hidden bg-[#1a1a1a]">
      <TitleBar />
      <Participants />
      <div className="flex h-[880px] shrink-0">
        <div className="flex w-[256px] items-start pl-[15px] pt-[750px]">
          <div className="flex size-[50px] items-center justify-center rounded-full border border-[#24282b] bg-[#0f1518]">
            <svg className="size-[20px]" viewBox="0 0 20 20" fill="none" stroke="#22d15c" strokeWidth="1.500"><path d="M1 19l1-5.500L14 1.700q1.300-1.200 2.600 0l1.700 1.700q1.300 1.300 0 2.600L6.500 17.500zM12 4l4 4" /></svg>
          </div>
        </div>
        <div className="relative flex w-[1408px] flex-col overflow-hidden rounded-b-[9px] bg-white font-[Inter,sans-serif]">
          <MenuBar />
          <TabStrip />
          <Toolbar />
          <Bookmarks />
          <Page />
          <Installer />
        </div>
      </div>
      <Taskbar />
    </div>
  );
}
